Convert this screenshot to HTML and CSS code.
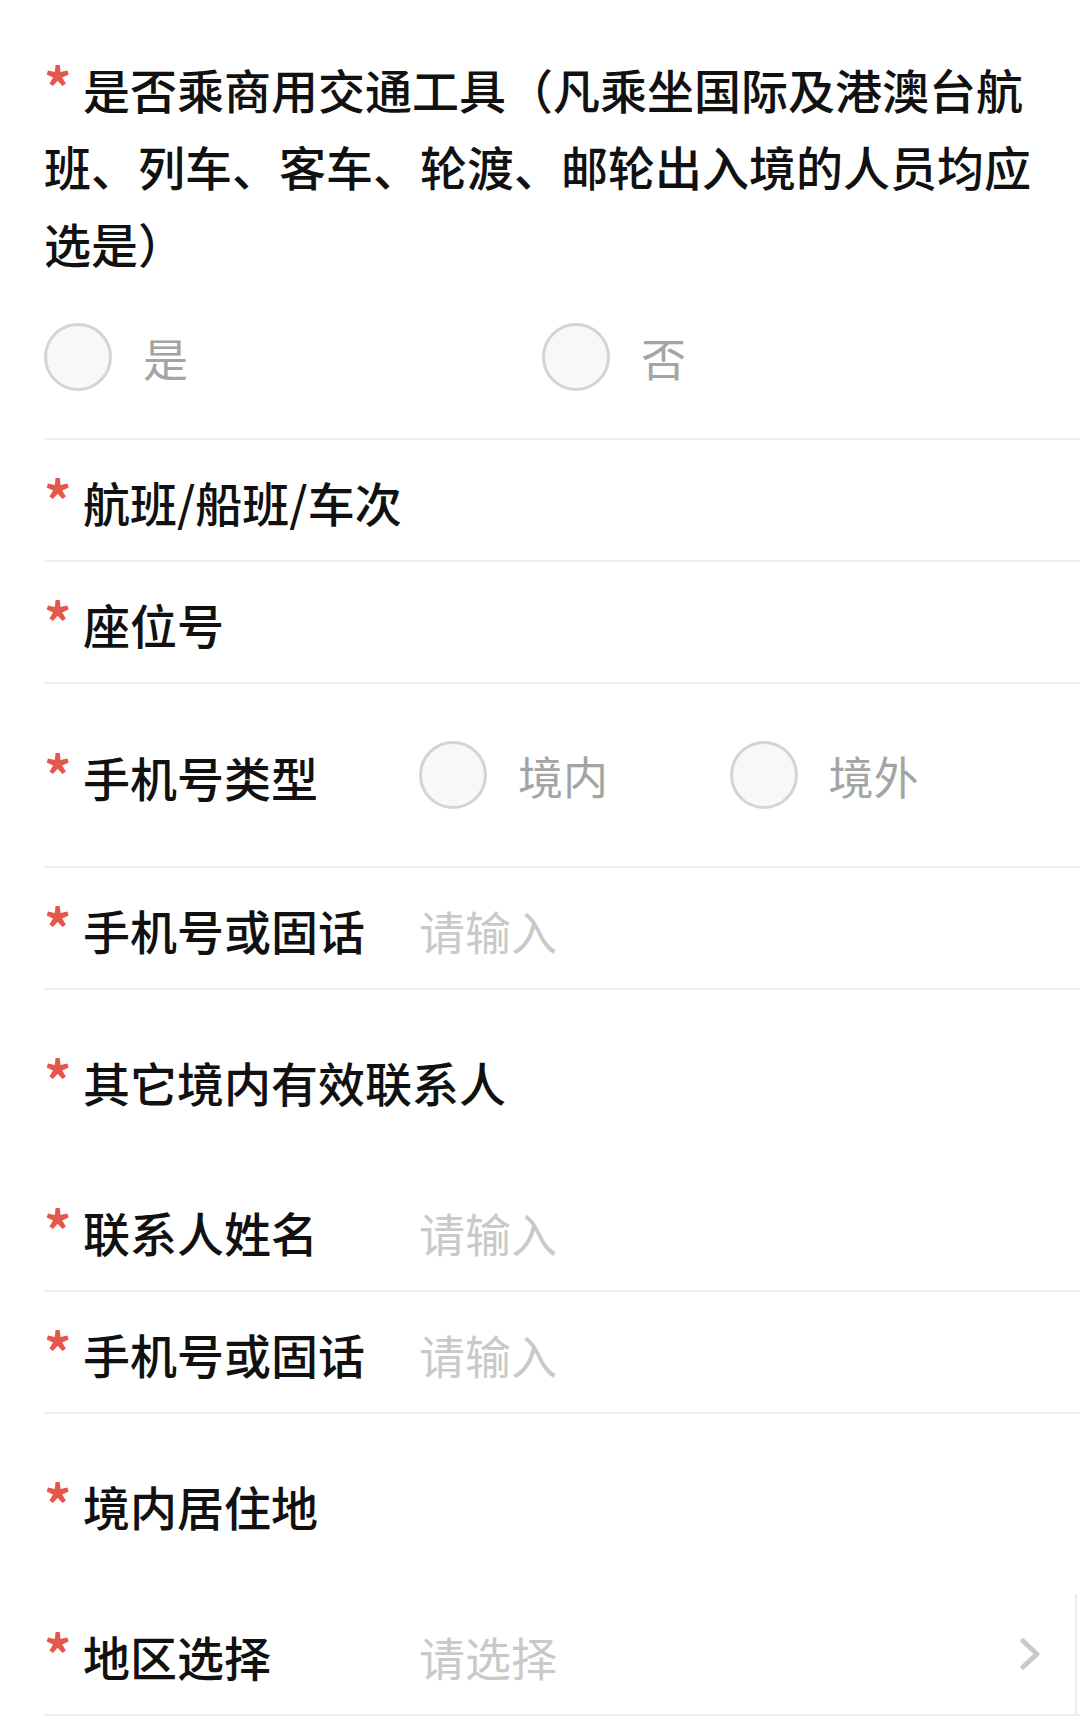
FILE: index.html
```html
<!DOCTYPE html>
<html lang="zh-CN">
<head>
<meta charset="utf-8">
<title>表单</title>
<link rel="stylesheet" href="styles.css">
</head>
<body>
<div class="form">
  <div class="field-block">
    <div class="question"><span class="req">*</span>是否乘商用交通工具（凡乘坐国际及港澳台航班、列车、客车、轮渡、邮轮出入境的人员均应选是）</div>
    <div class="radios radios-wide">
      <div class="radio"><span class="circle"></span><span class="radio-text">是</span></div>
      <div class="radio"><span class="circle"></span><span class="radio-text">否</span></div>
    </div>
  </div>

  <div class="row"><div class="label"><span class="req">*</span>航班/船班/车次</div></div>
  <div class="row"><div class="label"><span class="req">*</span>座位号</div></div>

  <div class="row row-tall">
    <div class="label"><span class="req">*</span>手机号类型</div>
    <div class="radios">
      <div class="radio"><span class="circle"></span><span class="radio-text">境内</span></div>
      <div class="radio"><span class="circle"></span><span class="radio-text">境外</span></div>
    </div>
  </div>

  <div class="row">
    <div class="label"><span class="req">*</span>手机号或固话</div>
    <div class="placeholder">请输入</div>
  </div>

  <div class="row row-header"><div class="label"><span class="req">*</span>其它境内有效联系人</div></div>

  <div class="row">
    <div class="label"><span class="req">*</span>联系人姓名</div>
    <div class="placeholder">请输入</div>
  </div>

  <div class="row">
    <div class="label"><span class="req">*</span>手机号或固话</div>
    <div class="placeholder">请输入</div>
  </div>

  <div class="row row-header"><div class="label"><span class="req">*</span>境内居住地</div></div>

  <div class="row row-select">
    <div class="label"><span class="req">*</span>地区选择</div>
    <div class="placeholder">请选择</div>
    <svg class="chevron" width="22" height="32" viewBox="0 0 22 32" aria-hidden="true">
      <polyline points="4,3 18,16 4,29" fill="none" stroke="#c9c9c9" stroke-width="5" stroke-linecap="round" stroke-linejoin="round"/>
    </svg>
  </div>
</div>
</body>
</html>
```

FILE: styles.css
```css
html, body {
  margin: 0;
  padding: 0;
  background: #ffffff;
}

body {
  font-family: "Noto Sans CJK SC", "Noto Sans", sans-serif;
  color: #111111;
  width: 1080px;
}

.form {
  padding-left: 44px;
}

.field-block {
  padding-top: 50px;
  padding-right: 40px;
  border-bottom: 2px solid #efefef;
}

.question {
  font-size: 47px;
  line-height: 77px;
  font-weight: 500;
  color: #111111;
}

.question + .radios-wide {
  margin-top: 42px;
}

.req {
  display: inline-block;
  width: 39px;
  font-size: 54px;
  line-height: 0;
  color: #e4574b;
  font-weight: 700;
}

.radios {
  display: flex;
  flex: 1;
}

.radios-wide {
  padding-bottom: 47px;
}

.radio {
  flex: 1;
  display: flex;
  align-items: center;
  gap: 31px;
}

.circle {
  width: 68px;
  height: 68px;
  box-sizing: border-box;
  border-radius: 50%;
  border: 3px solid #d4d4d4;
  background: #f8f8f8;
  flex-shrink: 0;
}

.radio-text {
  font-size: 45px;
  line-height: 1;
  color: #a4a4a4;
}

.row {
  display: flex;
  align-items: center;
  height: 120px;
  padding-right: 40px;
  border-bottom: 2px solid #efefef;
}

.row-tall {
  height: 182px;
}

.row-header {
  height: 180px;
  border-bottom: none;
}

.label {
  width: 375px;
  flex-shrink: 0;
  font-size: 47px;
  line-height: 60px;
  font-weight: 500;
  white-space: nowrap;
  padding-top: 4px;
}

.row-header .label {
  width: auto;
}

.placeholder {
  flex: 1;
  font-size: 46px;
  line-height: 60px;
  color: #c9c9c9;
  padding-top: 4px;
}

.row-select {
  position: relative;
}

.row-select::after {
  content: "";
  position: absolute;
  right: 3px;
  top: 0;
  bottom: 0;
  width: 2px;
  background: #ececec;
}

.chevron {
  flex-shrink: 0;
  margin-right: -1px;
}
```
